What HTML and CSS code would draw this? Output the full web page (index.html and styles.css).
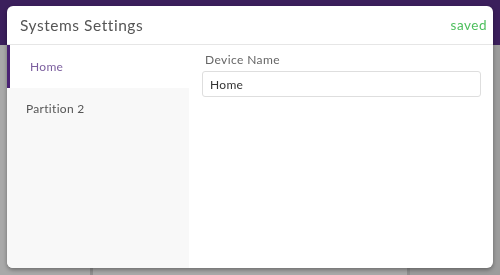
FILE: index.html
```html
<!DOCTYPE html>
<html lang="en">
<head>
    <meta charset="UTF-8">
    <title>Systems Settings</title>
    <link rel="stylesheet" href="styles.css">
</head>
<body>
    <div class="app">
        <div class="app-bar"></div>
        <div class="app-body">
            <div class="app-col"></div>
            <div class="app-col wide"></div>
        </div>
    </div>
    <div class="overlay">
        <div class="modal">
            <div class="modal-header">
                <h2>Systems Settings</h2>
                <span class="status">saved</span>
            </div>
            <div class="modal-body">
                <ul class="side-nav">
                    <li class="active">Home</li>
                    <li>Partition 2</li>
                </ul>
                <div class="content">
                    <label for="device_name">Device Name</label>
                    <input type="text" id="device_name" value="Home">
                </div>
            </div>
        </div>
    </div>
</body>
</html>
```

FILE: styles.css
```css
body {
    margin: 0;
    width: 500px;
    height: 275px;
    overflow: hidden;
    font-family: Lato, "Noto Sans", sans-serif;
}
.app {
    height: 100%;
    display: flex;
    flex-direction: column;
    background-color: #a9a9a9;
}
.app-bar {
    height: 45px;
    background-color: #3b1f5c;
}
.app-body {
    flex: 1;
    display: flex;
    gap: 4px;
    padding-left: 90px;
}
.app-col {
    width: 310px;
    border-left: 3px solid #8f8f8f;
}
.app-col.wide {
    width: 90px;
    background-color: #9c9c9c;
}
.overlay {
    position: fixed;
    inset: 0;
    padding: 6px 7px 7px 7px;
}
.modal {
    height: 262px;
    display: flex;
    flex-direction: column;
    background-color: #fff;
    border-radius: 6px;
    overflow: hidden;
    box-shadow: 0 2px 4px rgba(0, 0, 0, 0.35);
}
.modal-header {
    height: 38px;
    display: flex;
    align-items: center;
    justify-content: space-between;
    padding: 0 6px 0 13px;
    border-bottom: 1px solid #e6e6e6;
}
.modal-header h2 {
    margin: 0;
    font-size: 15.5px;
    font-weight: normal;
    letter-spacing: 0.55px;
    color: #555;
}
.status {
    font-size: 13.5px;
    letter-spacing: 0.5px;
    color: #4cbf5c;
}
.modal-body {
    flex: 1;
    display: flex;
}
.side-nav {
    width: 182px;
    margin: 0;
    padding: 0;
    list-style: none;
    background-color: #f8f8f8;
}
.side-nav li {
    height: 40px;
    display: flex;
    align-items: center;
    padding-left: 19px;
    font-size: 12px;
    letter-spacing: 0.3px;
    color: #555;
}
.side-nav li.active {
    height: 43px;
    padding-left: 20px;
    background-color: #fff;
    border-left: 3px solid #4a2273;
    color: #7b5e9e;
}
.content {
    flex: 1;
    padding: 7px 12px 0 13px;
}
.content label {
    display: block;
    margin-bottom: 4px;
    padding-left: 3px;
    font-size: 12px;
    letter-spacing: 0.4px;
    color: #666;
}
.content input {
    box-sizing: border-box;
    width: 100%;
    height: 26px;
    padding: 0 7px;
    border: 1px solid #dedede;
    border-radius: 3px;
    font-family: inherit;
    font-size: 12px;
    letter-spacing: 0.3px;
    color: #333;
}
```
